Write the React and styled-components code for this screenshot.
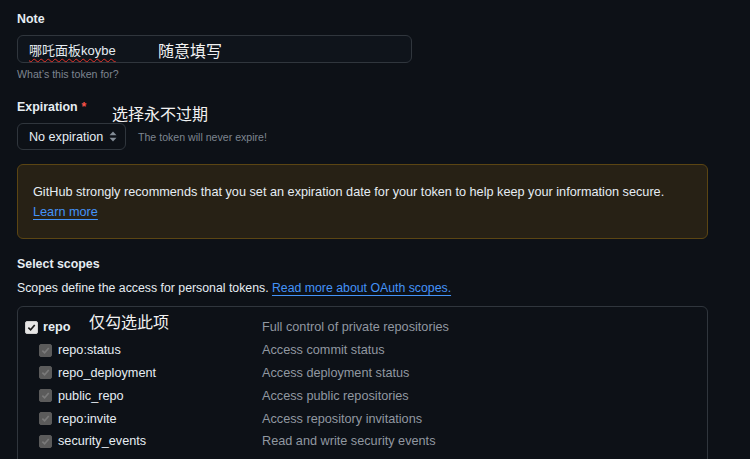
import React from "react";
import styled, { createGlobalStyle } from "styled-components";

const Global = createGlobalStyle`
  html, body { margin: 0; padding: 0; background: #0d1117; }
  body { font-family: "Liberation Sans", Arial, sans-serif; color: #e6edf3; }
`;

const Page = styled.div`
  width: 750px;
  height: 459px;
  overflow: hidden;
  box-sizing: border-box;
  padding: 9px 42px 0 17px;
  background: #0d1117;
`;

const Field = styled.div`
  position: relative;
  margin-top: ${(p) => p.$mt || 0}px;
`;

const Label = styled.div`
  font-size: 12.4px;
  font-weight: 700;
  line-height: 20px;
  color: #e6edf3;
`;

const Required = styled.span`
  color: #f85149;
  margin-left: 4px;
`;

const Annotation = styled.span`
  position: absolute;
  left: ${(p) => p.$x}px;
  top: ${(p) => p.$y}px;
  font-family: "Noto Sans CJK SC", sans-serif;
  font-size: 16px;
  line-height: 20px;
  color: #f2f2f2;
  white-space: nowrap;
  pointer-events: none;
`;

const TextInput = styled.div`
  margin-top: 6px;
  width: 395px;
  height: 28px;
  box-sizing: border-box;
  border: 1px solid #30363d;
  border-radius: 6px;
  background: #0f141b;
  padding: 0 11px;
  display: flex;
  align-items: center;
  font-size: 13px;
`;

const Typed = styled.span`
  font-family: "Liberation Sans", "Noto Sans CJK SC", sans-serif;
  color: #e6edf3;
  text-decoration: underline wavy #e5332a;
  text-decoration-thickness: 1px;
  text-underline-offset: 3px;
`;

const Help = styled.div`
  margin-top: 3px;
  font-size: 10.6px;
  line-height: 16px;
  color: #7d8590;
`;

const SelectRow = styled.div`
  margin-top: 6px;
  display: flex;
  align-items: center;
  gap: 12px;
`;

const Select = styled.div`
  width: 109px;
  height: 27px;
  box-sizing: border-box;
  border: 1px solid #30363d;
  border-radius: 6px;
  background: #0d1117;
  display: flex;
  align-items: center;
  justify-content: space-between;
  padding: 0 8px 0 11px;
  font-size: 12.6px;
  white-space: nowrap;
  color: #e6edf3;
`;

const InlineNote = styled.span`
  font-size: 10.6px;
  color: #7d8590;
`;

const Flash = styled.div`
  margin-top: 14px;
  box-sizing: border-box;
  border: 1px solid #5b4513;
  border-radius: 6px;
  background: #272115;
  padding: 17px 15px 16px;
  font-size: 12.7px;
  line-height: 20px;
  color: #e6edf3;
`;

const Link = styled.a`
  color: #4493f8;
  text-decoration: underline;
  text-underline-offset: 3px;
`;

const Desc = styled.div`
  margin-top: 4px;
  font-size: 12.3px;
  line-height: 20px;
  color: #e6edf3;
`;

const ScopeBox = styled.div`
  position: relative;
  margin-top: 8px;
  height: 200px;
  box-sizing: border-box;
  border: 1px solid #30363d;
  border-radius: 6px;
  padding: 9px 0 0 7px;
`;

const ScopeRow = styled.div`
  display: grid;
  grid-template-columns: 237px 1fr;
  height: 22.8px;
  align-items: center;
  font-size: 12.7px;
`;

const ScopeName = styled.div`
  display: flex;
  align-items: center;
  padding-left: ${(p) => (p.$child ? 14 : 0)}px;
  gap: ${(p) => (p.$child ? 6 : 5)}px;
  font-weight: ${(p) => (p.$child ? 400 : 700)};
  color: #e6edf3;
`;

const ScopeDesc = styled.div`
  color: #9198a1;
`;

const Check = styled.span`
  width: 13px;
  height: 13px;
  box-sizing: border-box;
  border-radius: 2px;
  display: inline-flex;
  align-items: center;
  justify-content: center;
  background: ${(p) => (p.$disabled ? "#5b5b5b" : "#e6e6e6")};
  border: 1px solid ${(p) => (p.$disabled ? "#5b5b5b" : "#cfcfcf")};
`;

const CheckBox = ({ disabled }) => (
  <Check $disabled={disabled}>
    <svg width="9" height="9" viewBox="0 0 10 10">
      <path
        d="M1.5 5.2 L4 7.6 L8.6 2.2"
        fill="none"
        stroke={disabled ? "#7a7a7a" : "#1c1c1c"}
        strokeWidth="1.8"
      />
    </svg>
  </Check>
);

const SortIcon = () => (
  <svg width="8" height="11" viewBox="0 0 8 11">
    <path d="M4 0.5 L7.5 4.3 H0.5 Z" fill="#848d97" />
    <path d="M4 10.5 L7.5 6.7 H0.5 Z" fill="#848d97" />
  </svg>
);

const scopes = [
  ["repo:status", "Access commit status"],
  ["repo_deployment", "Access deployment status"],
  ["public_repo", "Access public repositories"],
  ["repo:invite", "Access repository invitations"],
  ["security_events", "Read and write security events"],
];

export default function App() {
  return (
    <>
      <Global />
      <Page>
        <Field>
          <Label>Note</Label>
          <TextInput>
            <Typed>哪吒面板koybe</Typed>
          </TextInput>
          <Annotation $x={141} $y={31}>随意填写</Annotation>
          <Help>What’s this token for?</Help>
        </Field>

        <Field $mt={15}>
          <Label>
            Expiration<Required>*</Required>
          </Label>
          <Annotation $x={95} $y={6}>选择永不过期</Annotation>
          <SelectRow>
            <Select>
              <span>No expiration</span>
              <SortIcon />
            </Select>
            <InlineNote>The token will never expire!</InlineNote>
          </SelectRow>
        </Field>

        <Flash>
          GitHub strongly recommends that you set an expiration date for your token to help keep your information secure.
          <br />
          <Link>Learn more</Link>
        </Flash>

        <Field $mt={15}>
          <Label>Select scopes</Label>
          <Desc>
            Scopes define the access for personal tokens. <Link>Read more about OAuth scopes.</Link>
          </Desc>
        </Field>

        <ScopeBox>
          <Annotation $x={71} $y={4}>仅勾选此项</Annotation>
          <ScopeRow>
            <ScopeName>
              <CheckBox />
              repo
            </ScopeName>
            <ScopeDesc>Full control of private repositories</ScopeDesc>
          </ScopeRow>
          {scopes.map(([name, desc]) => (
            <ScopeRow key={name}>
              <ScopeName $child>
                <CheckBox disabled />
                {name}
              </ScopeName>
              <ScopeDesc>{desc}</ScopeDesc>
            </ScopeRow>
          ))}
        </ScopeBox>
      </Page>
    </>
  );
}
